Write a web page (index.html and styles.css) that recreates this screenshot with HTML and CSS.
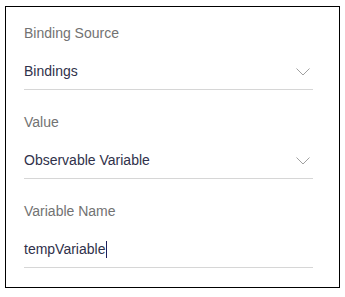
FILE: index.html
```html
<!DOCTYPE html>
<html lang="en">

<head>
    <meta charset="UTF-8">
    <meta name="viewport" content="width=device-width, initial-scale=1.0">
    <title>Binding Properties</title>
    <link rel="stylesheet" href="styles.css">
</head>

<body>

    <div class="panel">
        <div class="field">
            <div class="field-label">Binding Source</div>
            <div class="field-select">
                <span>Bindings</span>
                <svg class="chevron" width="14" height="8" viewBox="0 0 14 8">
                    <polyline points="0.5,0.5 7,7 13.5,0.5" fill="none" stroke="#a0a0a0" stroke-width="1" />
                </svg>
            </div>
        </div>

        <div class="field">
            <div class="field-label">Value</div>
            <div class="field-select">
                <span>Observable Variable</span>
                <svg class="chevron" width="14" height="8" viewBox="0 0 14 8">
                    <polyline points="0.5,0.5 7,7 13.5,0.5" fill="none" stroke="#a0a0a0" stroke-width="1" />
                </svg>
            </div>
        </div>

        <div class="field">
            <div class="field-label">Variable Name</div>
            <div class="field-input">
                <span>tempVariable</span><span class="caret"></span>
            </div>
        </div>
    </div>

</body>

</html>
```

FILE: styles.css
```css
/* Global Styling */
body {
    margin: 6px 0 0 5px;
    padding: 0;
    font-family: 'Liberation Sans', Arial, sans-serif;
    background-color: #fff;
}

/* Panel */
.panel {
    width: 335px;
    box-sizing: border-box;
    border: 1px solid #000;
    padding: 16px 26px 19px 18px;
    display: flex;
    flex-direction: column;
    gap: 22px;
}

.field-label {
    font-size: 14px;
    line-height: 20px;
    color: #727272;
    margin-bottom: 18px;
}

.field-select,
.field-input {
    display: flex;
    align-items: center;
    height: 29px;
    box-sizing: border-box;
    padding-bottom: 8px;
    border-bottom: 1px solid #d6d6d6;
    font-size: 14px;
    line-height: 20px;
    color: #30314a;
}

.field-select span {
    flex: 1;
}

.chevron {
    margin-right: 3px;
    margin-top: 1px;
}

/* Text cursor */
.caret {
    display: inline-block;
    width: 1px;
    height: 17px;
    margin-left: 1px;
    margin-top: 1px;
    background-color: #1d1f5c;
}
```
